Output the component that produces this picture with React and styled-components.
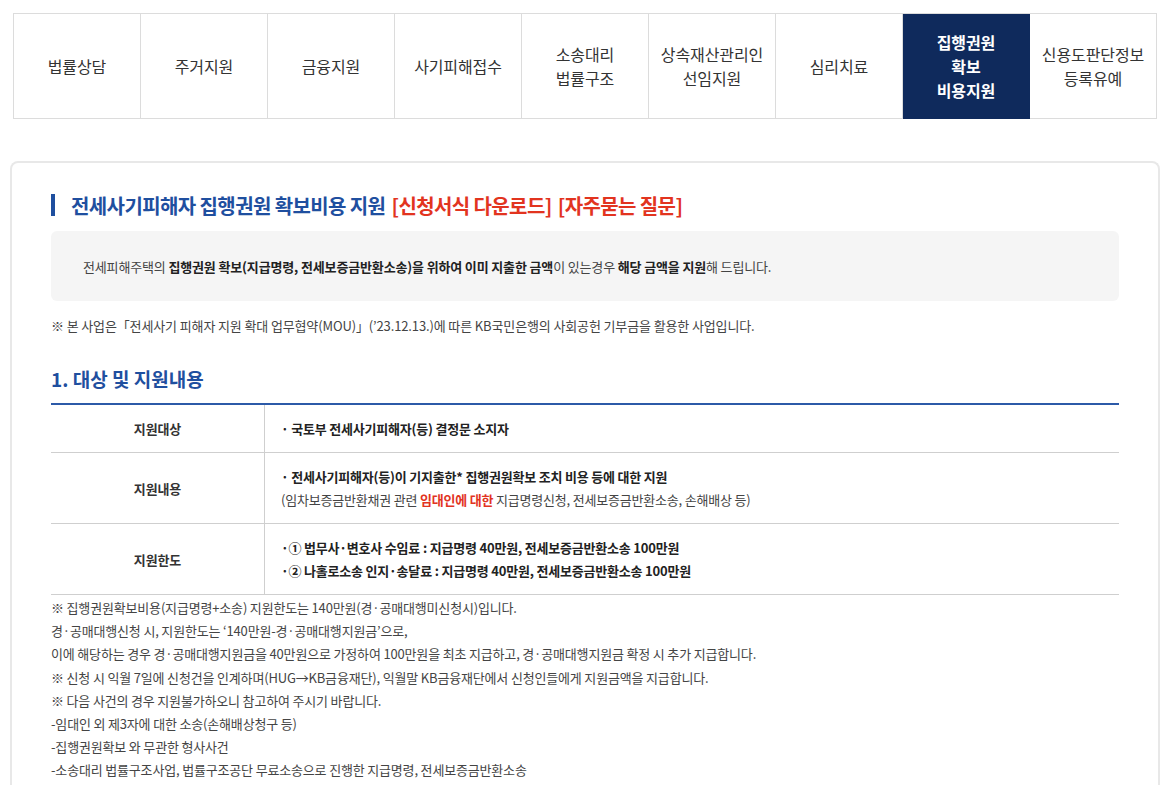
import React from "react";
import styled, { createGlobalStyle } from "styled-components";

const Global = createGlobalStyle`
  html, body { margin: 0; padding: 0; background: #fff; }
  body {
    font-family: "Noto Sans CJK KR", "Noto Sans", sans-serif;
    color: #333;
  }
  * { box-sizing: border-box; }
`;

const Page = styled.div`
  padding: 13px 9px 0 10px;
`;

const Tabs = styled.nav`
  display: grid;
  grid-template-columns: repeat(9, 127px);
  margin: 0 3px 0 3px;
  border-top: 1px solid #dcdcdc;
  border-left: 1px solid #dcdcdc;
`;

const Tab = styled.div`
  height: 105px;
  display: flex;
  align-items: center;
  justify-content: center;
  text-align: center;
  font-size: 16px;
  line-height: 24px;
  letter-spacing: -0.1px;
  border-right: 1px solid #dcdcdc;
  border-bottom: 1px solid #dcdcdc;
  background: ${(p) => (p.$active ? "#0f2a5c" : "#fff")};
  color: ${(p) => (p.$active ? "#fff" : "#333")};
  font-weight: ${(p) => (p.$active ? 700 : 400)};
  border-color: ${(p) => (p.$active ? "#0f2a5c" : "#dcdcdc")};
`;

const Card = styled.section`
  margin-top: 42px;
  border: 2px solid #e8e8e8;
  border-bottom: none;
  border-radius: 8px 8px 0 0;
  padding: 30px 39px 40px;
`;

const Heading = styled.h2`
  margin: 0;
  display: flex;
  align-items: center;
  height: 24px;
  font-size: 20px;
  font-weight: 700;
  letter-spacing: -0.6px;
  color: #1f4f9f;
  &::before {
    content: "";
    width: 4px;
    height: 22px;
    background: #1f4f9f;
    margin-right: 16px;
  }
`;

const Red = styled.span`
  color: #e2341f;
  margin-left: 6px;
`;

const InfoBox = styled.div`
  margin-top: 14px;
  height: 70px;
  display: flex;
  align-items: center;
  padding-left: 32px;
  background: #f5f5f5;
  border-radius: 6px;
  font-size: 13px;
  letter-spacing: -0.15px;
  color: #444;
  b { color: #222; font-weight: 700; }
`;

const Note = styled.p`
  margin: 15px 0 0;
  font-size: 13px;
  line-height: 20px;
  letter-spacing: -0.13px;
  color: #444;
`;

const SectionTitle = styled.h3`
  margin: 30px 0 0;
  font-size: 19px;
  line-height: 26px;
  font-weight: 700;
  letter-spacing: 0;
  color: #1f4f9f;
`;

const Table = styled.div`
  margin-top: 11px;
  border-top: 2px solid #2c5aa8;
`;

const Row = styled.div`
  display: grid;
  grid-template-columns: 214px 1fr;
  border-bottom: 1px solid #cfcfcf;
`;

const Th = styled.div`
  display: flex;
  align-items: center;
  justify-content: center;
  border-right: 1px solid #cfcfcf;
  font-size: 13px;
  font-weight: 700;
  letter-spacing: -0.1px;
  color: #333;
`;

const Td = styled.div`
  padding: 12px 16px;
  font-size: 13px;
  line-height: 23px;
  letter-spacing: -0.2px;
  color: #444;
`;

const Line = styled.div`
  font-weight: ${(p) => (p.$bold ? 700 : 400)};
  color: ${(p) => (p.$bold ? "#222" : "#444")};
`;

const Em = styled.b`
  color: #e2341f;
  font-weight: 700;
`;

const Notes = styled.div`
  margin-top: 1px;
  font-size: 13px;
  line-height: 23.2px;
  letter-spacing: -0.17px;
  color: #444;
`;

const tabs = [
  ["법률상담"],
  ["주거지원"],
  ["금융지원"],
  ["사기피해접수"],
  ["소송대리", "법률구조"],
  ["상속재산관리인", "선임지원"],
  ["심리치료"],
  ["집행권원", "확보", "비용지원"],
  ["신용도판단정보", "등록유예"],
];

const notes = [
  "※ 집행권원확보비용(지급명령+소송) 지원한도는 140만원(경·공매대행미신청시)입니다.",
  "경·공매대행신청 시, 지원한도는 ‘140만원-경·공매대행지원금’으로,",
  "이에 해당하는 경우 경·공매대행지원금을 40만원으로 가정하여 100만원을 최초 지급하고, 경·공매대행지원금 확정 시 추가 지급합니다.",
  "※ 신청 시 익월 7일에 신청건을 인계하며(HUG→KB금융재단), 익월말 KB금융재단에서 신청인들에게 지원금액을 지급합니다.",
  "※ 다음 사건의 경우 지원불가하오니 참고하여 주시기 바랍니다.",
  "-임대인 외 제3자에 대한 소송(손해배상청구 등)",
  "-집행권원확보 와 무관한 형사사건",
  "-소송대리 법률구조사업, 법률구조공단 무료소송으로 진행한 지급명령, 전세보증금반환소송",
];

export default function App() {
  return (
    <>
      <Global />
      <Page>
        <Tabs>
          {tabs.map((t, i) => (
            <Tab key={i} $active={i === 7}>
              <div>
                {t.map((l, j) => (
                  <div key={j}>{l}</div>
                ))}
              </div>
            </Tab>
          ))}
        </Tabs>
        <Card>
          <Heading>
            전세사기피해자 집행권원 확보비용 지원
            <Red>[신청서식 다운로드]</Red>
            <Red>[자주묻는 질문]</Red>
          </Heading>
          <InfoBox>
            <span>
              전세피해주택의 <b>집행권원 확보(지급명령, 전세보증금반환소송)을 위하여 이미 지출한 금액</b>이 있는경우{" "}
              <b>해당 금액을 지원</b>해 드립니다.
            </span>
          </InfoBox>
          <Note>
            ※ 본 사업은「전세사기 피해자 지원 확대 업무협약(MOU)」(’23.12.13.)에 따른 KB국민은행의 사회공헌 기부금을 활용한 사업입니다.
          </Note>
          <SectionTitle>1. 대상 및 지원내용</SectionTitle>
          <Table>
            <Row>
              <Th>지원대상</Th>
              <Td>
                <Line $bold>· 국토부 전세사기피해자(등) 결정문 소지자</Line>
              </Td>
            </Row>
            <Row>
              <Th>지원내용</Th>
              <Td>
                <Line $bold>· 전세사기피해자(등)이 기지출한* 집행권원확보 조치 비용 등에 대한 지원</Line>
                <Line>
                  (임차보증금반환채권 관련 <Em>임대인에 대한</Em> 지급명령신청, 전세보증금반환소송, 손해배상 등)
                </Line>
              </Td>
            </Row>
            <Row>
              <Th>지원한도</Th>
              <Td>
                <Line $bold>·① 법무사·변호사 수임료 : 지급명령 40만원, 전세보증금반환소송 100만원</Line>
                <Line $bold>·② 나홀로소송 인지·송달료 : 지급명령 40만원, 전세보증금반환소송 100만원</Line>
              </Td>
            </Row>
          </Table>
          <Notes>
            {notes.map((n, i) => (
              <div key={i}>{n}</div>
            ))}
          </Notes>
        </Card>
      </Page>
    </>
  );
}
